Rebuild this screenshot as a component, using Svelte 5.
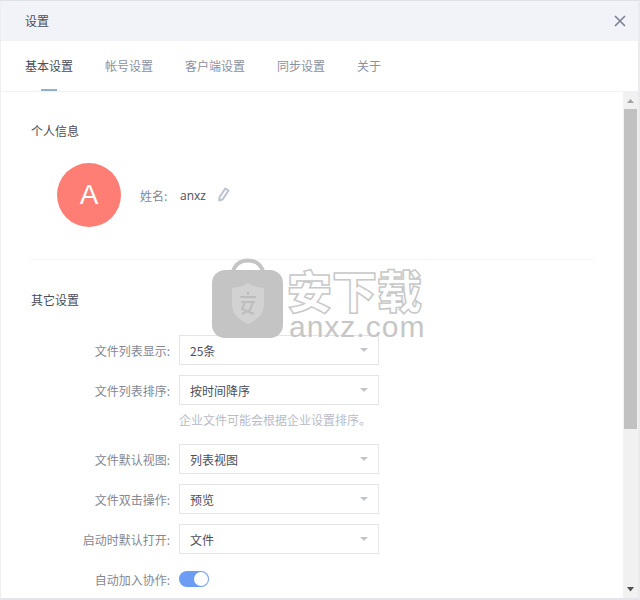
<script>
  const tabs = ['基本设置', '帐号设置', '客户端设置', '同步设置', '关于'];
  const rows = [
    { label: '文件列表显示:', value: '25条' },
    { label: '文件列表排序:', value: '按时间降序', hint: '企业文件可能会根据企业设置排序。' },
    { label: '文件默认视图:', value: '列表视图' },
    { label: '文件双击操作:', value: '预览' },
    { label: '启动时默认打开:', value: '文件' }
  ];
</script>

<div class="win">
  <header class="head">
    <span class="title">设置</span>
    <svg class="close" width="12" height="12" viewBox="0 0 12 12"><path d="M1 1l10 10M11 1L1 11" stroke="#7b8094" stroke-width="1.6" fill="none"/></svg>
  </header>
  <nav class="tabs">
    {#each tabs as t, i}
      <span class="tab" class:active={i === 0}>{t}</span>
    {/each}
  </nav>
  <div class="body">
    <main class="content">
      <h2 class="h1">个人信息</h2>
      <div class="profile">
        <div class="avatar">A</div>
        <span class="name-label">姓名:</span>
        <span class="name">anxz</span>
        <svg class="pen" width="14" height="15" viewBox="0 0 14 15"><path d="M9.300 1.500l3.200 2-5.800 8.800-3.400 1.400.2-3.400z" fill="none" stroke="#bcc2d2" stroke-width="2" stroke-linejoin="round"/></svg>
      </div>
      <div class="rule"></div>
      <h2 class="h2">其它设置</h2>
      <div class="form">
        {#each rows as r}
          <div class="row">
            <span class="label">{r.label}</span>
            <div class="select"><span>{r.value}</span><i class="caret"></i></div>
          </div>
          {#if r.hint}<p class="hint">{r.hint}</p>{/if}
        {/each}
        <div class="row">
          <span class="label">自动加入协作:</span>
          <div class="toggle"><i class="knob"></i></div>
        </div>
      </div>
    </main>
    <aside class="scrollbar">
      <svg class="arrow" width="15" height="17" viewBox="0 0 15 17"><path d="M4 11h7L7.500 7z" fill="#a3a3a3"/></svg>
      <div class="track"><div class="thumb"></div></div>
      <svg class="arrow" width="15" height="17" viewBox="0 0 15 17"><path d="M4 6h7L7.500 10.500z" fill="#505050"/></svg>
    </aside>
  </div>

  <div class="mark">
    <svg class="bag" width="72" height="80" viewBox="0 0 72 80">
      <path d="M20 16C23 5 29 2.500 36 2.500S49 5 52 16" fill="none" stroke="#c4c4c4" stroke-width="4"/>
      <rect x="0" y="12" width="71" height="68" rx="13" fill="#c4c4c4"/>
      <path d="M20 30Q30 29 36 25Q42 29 52 30V49Q50 60 36 66Q22 60 20 49z" fill="#d2d2d2"/>
      <path d="M28 39h16M36 34v3M29 44h14M33 44l-3 7 12 5M41 44l-3 8-8 4" fill="none" stroke="#bdbdbd" stroke-width="2"/>
    </svg>
    <div class="mark-text">
      <div class="mark-cn">安下载</div>
      <div class="mark-en">anxz.com</div>
    </div>
  </div>
</div>

<style>
  :global(body) { margin: 0; background: #fff; }
  .win {
    position: relative;
    width: 640px;
    height: 600px;
    box-sizing: border-box;
    display: flex;
    flex-direction: column;
    border-top: 1px solid #dfe1e8;
    border-left: 1px solid #eceef2;
    border-right: 2px solid #eaebf0;
    border-bottom: 2px solid #e4e5e9;
    overflow: hidden;
    font-family: "Noto Sans CJK SC", "Liberation Sans", sans-serif;
    font-size: 12px;
  }
  .head {
    height: 40px;
    flex: none;
    background: #f1f3f9;
    display: flex;
    align-items: center;
    justify-content: space-between;
    padding: 0 12px 0 24px;
  }
  .title { color: #4a4d58; font-size: 12px; margin-top: -2px; }
  .tabs {
    height: 51px;
    flex: none;
    box-sizing: border-box;
    border-bottom: 1px solid #f0f1f4;
    display: flex;
    gap: 32px;
    padding: 0 0 0 24px;
    background: #fff;
  }
  .tab {
    position: relative;
    color: #8c909c;
    line-height: 50px;
  }
  .tab.active { color: #4a4d58; }
  .tab.active::after {
    content: "";
    position: absolute;
    left: 16px;
    bottom: 0;
    width: 16px;
    height: 2px;
    background: #8fb1d0;
  }
  .body { flex: 1; display: flex; min-height: 0; }
  .content { flex: 1; min-width: 0; padding: 0 30px; overflow: hidden; }
  .h1, .h2 { margin: 0; font-size: 12px; font-weight: 400; color: #4a4d58; line-height: 20px; }
  .h1 { padding-top: 29px; }
  .profile {
    display: flex;
    align-items: center;
    padding: 22px 0 0 26px;
    height: 64px;
  }
  .avatar {
    width: 64px;
    height: 64px;
    border-radius: 50%;
    background: #fe7d75;
    color: #fff;
    font-size: 28px;
    font-family: "Liberation Sans", sans-serif;
    text-align: center;
    line-height: 64px;
    margin-right: 19px;
  }
  .name-label { color: #858893; margin-right: 9px; width: 31px; }
  .name { color: #4a4d58; font-family: "Open Sans", sans-serif; margin-right: 10px; }
  .pen { flex: none; margin-top: -1px; }
  .rule { height: 1px; background: #f3f4f6; margin: 32px 0 0 0; width: 562px; }
  .h2 { padding-top: 30px; }
  .form { padding-top: 25px; }
  .row { display: flex; align-items: center; height: 30px; margin-bottom: 10px; }
  .label { width: 148px; text-align: right; color: #858893; padding-right: 9px; flex: none; box-sizing: border-box; }
  .select {
    width: 200px;
    height: 30px;
    box-sizing: border-box;
    border: 1px solid #e3e5ea;
    background: #fff;
    display: flex;
    align-items: center;
    justify-content: space-between;
    padding: 0 10px 0 10px;
    color: #4a4d58;
  }
  .caret {
    width: 0;
    height: 0;
    border-left: 4px solid transparent;
    border-right: 4px solid transparent;
    border-top: 4px solid #c2c4cb;
  }
  .hint { margin: -5px 0 14px 148px; line-height: 20px; color: #b9bcc6; }
  .toggle {
    width: 30px;
    height: 16px;
    border-radius: 8px;
    background: #6d9cf4;
    position: relative;
  }
  .knob {
    position: absolute;
    right: 1px;
    top: 1px;
    width: 14px;
    height: 14px;
    border-radius: 50%;
    background: #fff;
  }
  .scrollbar {
    width: 15px;
    flex: none;
    background: #f1f1f1;
    display: flex;
    flex-direction: column;
  }
  .arrow { flex: none; display: block; }
  .track { flex: 1; padding: 0 1px; }
  .thumb { height: 320px; background: #c1c1c1; }
  .mark {
    position: absolute;
    left: 211px;
    top: 257px;
    display: flex;
    gap: 3px;
    pointer-events: none;
  }
  .mark-text { display: flex; flex-direction: column; padding-top: 8px; }
  .mark-cn {
    font-size: 45px;
    line-height: 48px;
    font-weight: 900;
    color: #fff;
    -webkit-text-stroke: 1.500px #c8c8c8;
  }
  .mark-en {
    font-family: "Liberation Sans", sans-serif;
    font-size: 30px;
    line-height: 26px;
    color: #c6c6c6;
    letter-spacing: 1px;
    margin-left: 2px;
  }
</style>
